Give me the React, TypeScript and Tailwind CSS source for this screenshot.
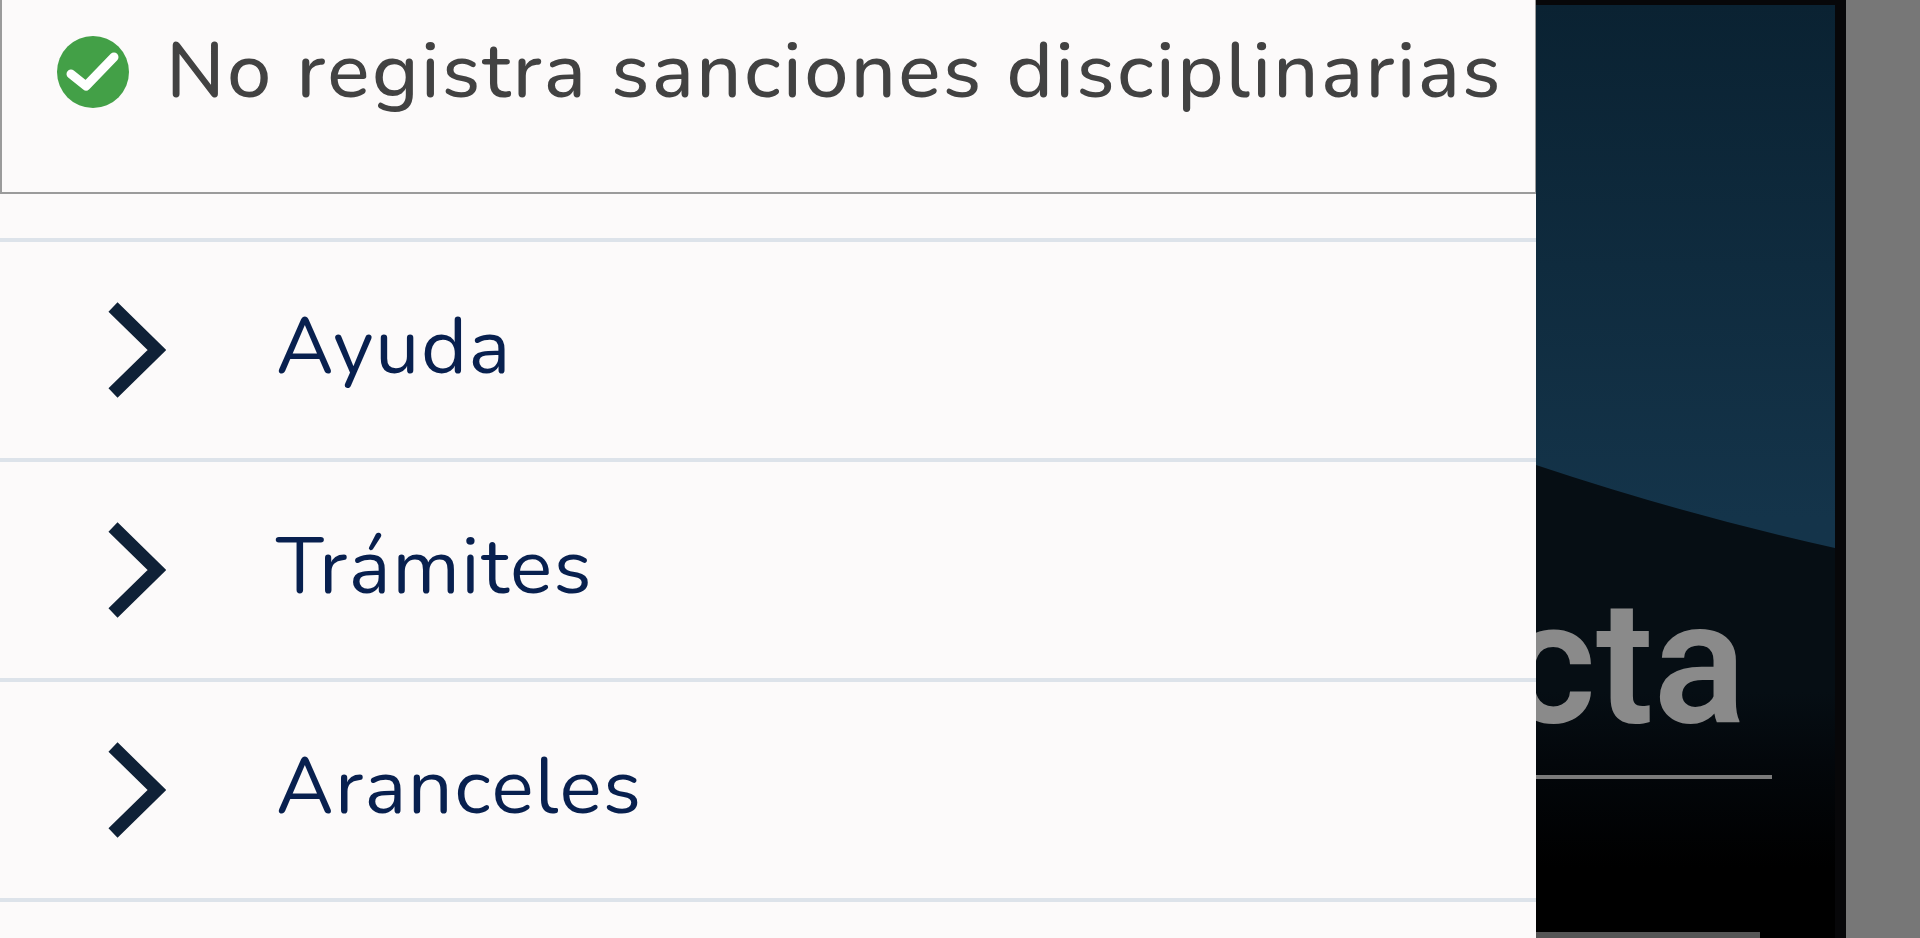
import React from 'react';

const menuItems = ['Ayuda', 'Trámites', 'Aranceles'];

// Green check badge shown next to the disciplinary status
const CheckBadge: React.FC = () => (
    <svg viewBox="0 0 72 72" className="w-[72px] h-[72px] shrink-0">
        <circle cx="36" cy="36" r="36" fill="#43a047" />
        <path d="M14 38 L29 50 L57 21" fill="none" stroke="#ffffff" strokeWidth="9" strokeLinecap="round" strokeLinejoin="round" />
    </svg>
);

const Chevron: React.FC = () => (
    <svg viewBox="0 0 60 100" className="w-[60px] h-[100px] shrink-0">
        <path d="M7 7 L51 50 L7 93" fill="none" stroke="#0f2137" strokeWidth="13" />
    </svg>
);

const MenuRow: React.FC<{ label: string }> = ({ label }) => (
    <div className="flex h-[220px] items-center border-b-4 border-[#dde3ea] pl-[106px]">
        <Chevron />
        <span className="mb-[5px] ml-[110px] text-[79px] leading-none tracking-[1.5px] text-[#08204f]">{label}</span>
    </div>
);

export default function App() {
    return (
        <div className="flex h-[938px] w-full overflow-hidden font-['Nunito','Lato','Noto_Sans',sans-serif]">
            {/* Drawer panel */}
            <div className="w-[1536px] shrink-0 bg-[#fcfafa]">
                <div className="flex h-[194px] items-start gap-[37px] border-b-2 border-l-2 border-r border-[#9b9b9b] pl-[55px] pt-[36px]">
                    <CheckBadge />
                    <span className="text-[79px] font-medium leading-[70px] tracking-[2.4px] text-[#424242]">No registra sanciones disciplinarias</span>
                </div>
                <div className="mt-[44px] border-t-4 border-[#dde3ea]">
                    {menuItems.map((item) => (
                        <MenuRow key={item} label={item} />
                    ))}
                </div>
            </div>

            {/* Phone behind the drawer */}
            <div className="w-[310px] shrink-0 bg-[#070709] pt-[5px]">
                <div className="relative h-full w-[299px] overflow-hidden bg-gradient-to-b from-[#0a2232] via-[#14344a] via-55% to-[#14344a]">
                    <svg viewBox="0 0 299 933" preserveAspectRatio="none" className="absolute inset-0 h-full w-full">
                        <defs>
                            <linearGradient id="hill" x1="0" y1="0.48" x2="0" y2="0.85">
                                <stop offset="0" stopColor="#060e14" />
                                <stop offset="0.4" stopColor="#03070b" />
                                <stop offset="1" stopColor="#000000" />
                            </linearGradient>
                        </defs>
                        <path d="M0 460 Q150 510 299 543 L299 933 L0 933 Z" fill="url(#hill)" />
                    </svg>
                    <span className="absolute left-[-30px] top-[558px] font-['Roboto',sans-serif] text-[172px] font-semibold leading-[200px] text-[#8a8a8a]">cta</span>
                    <div className="absolute left-0 top-[770px] h-1 w-[236px] bg-[#7a7a7a]" />
                    <div className="absolute bottom-0 left-0 h-[6px] w-[224px] bg-[#555555]" />
                </div>
            </div>

            <div className="flex-1 bg-[#777777]" />
        </div>
    );
}
